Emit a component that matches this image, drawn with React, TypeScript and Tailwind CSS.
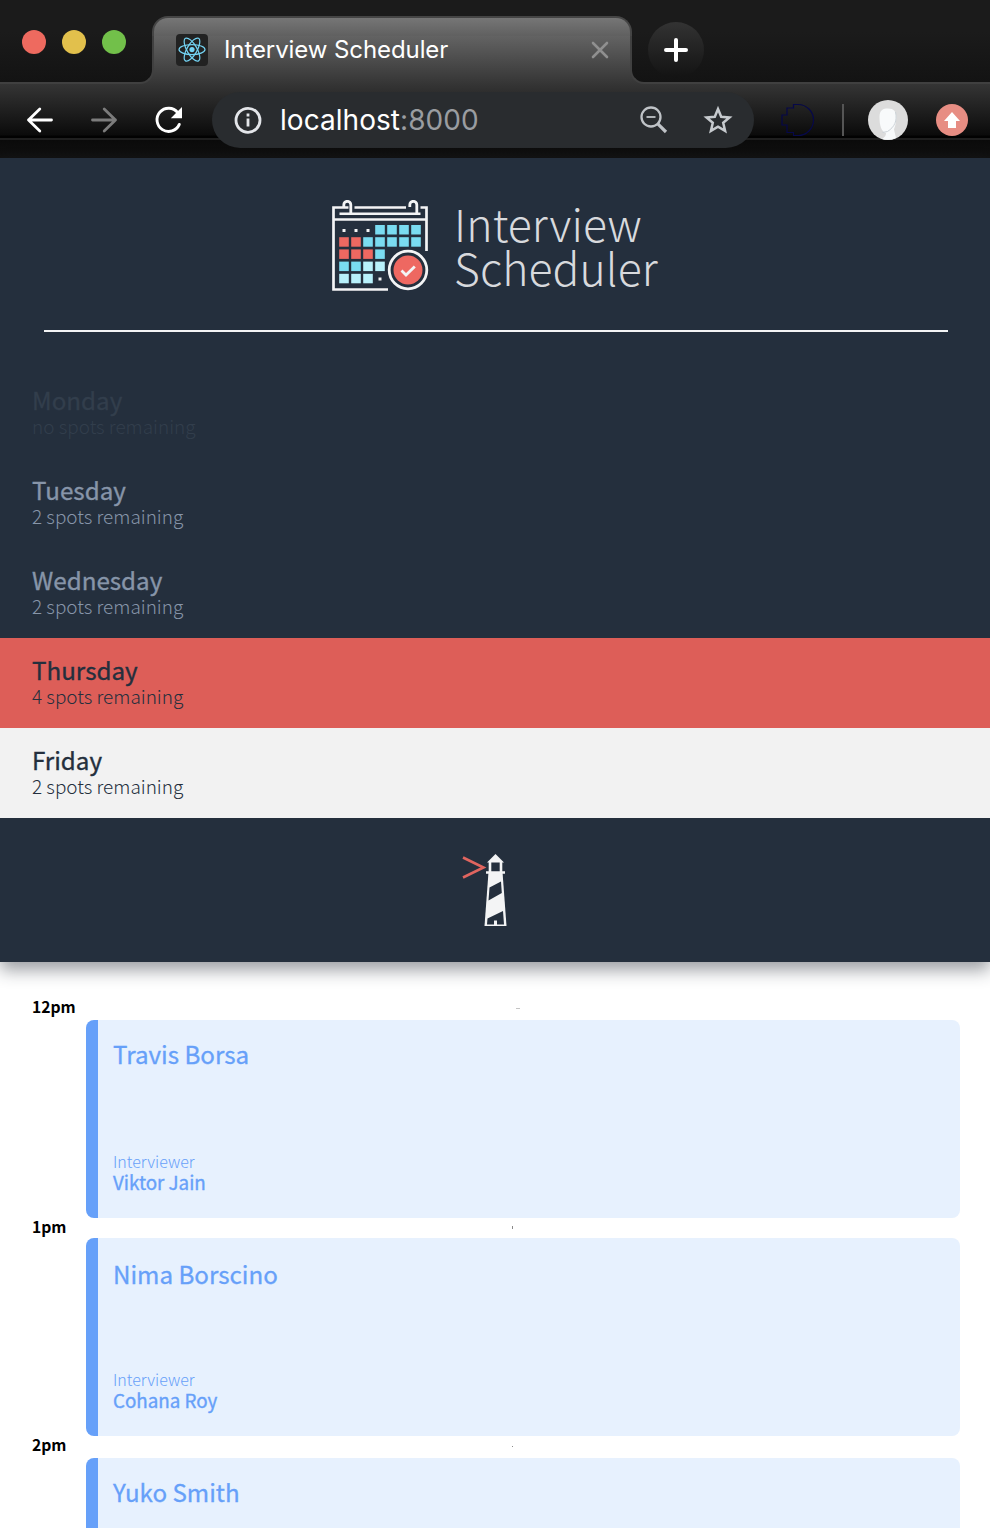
import type { ReactNode } from "react";

const days = [
  { name: "Monday", spots: "no spots remaining", row: "text-[#323e4c]" },
  { name: "Tuesday", spots: "2 spots remaining", row: "text-[#8795a9]" },
  { name: "Wednesday", spots: "2 spots remaining", row: "text-[#8795a9]" },
  { name: "Thursday", spots: "4 spots remaining", row: "bg-[#dd5e58] text-[#242f3d]" },
  { name: "Friday", spots: "2 spots remaining", row: "bg-[#f2f2f2] text-[#242f3d]" },
];

const appointments = [
  { time: "12pm", student: "Travis Borsa", interviewer: "Viktor Jain", slot: "h-[218px]", card: "h-[198px] pt-[19px]", label: "h-[18px] mb-1", gap: "mt-[81px]", mark: "mt-0.5 ml-[441px] h-px w-1 bg-[#c4c4c4]" },
  { time: "1pm", student: "Nima Borscino", interviewer: "Cohana Roy", slot: "h-[220px]", card: "h-[198px] pt-[21px]", label: "h-[22px]", gap: "mt-[79px]", mark: "ml-[437px] h-[3px] w-px bg-[#8a8a8a]" },
  { time: "2pm", student: "Yuko Smith", interviewer: "", slot: "h-[92px]", card: "h-[70px] rounded-b-none pt-[19px]", label: "h-[18px] mb-1", gap: "", mark: "mt-0.5 ml-[437px] h-px w-px bg-[#8a8a8a]" },
];

function ReactMark() {
  return (
    <div className="flex size-8 items-center justify-center rounded bg-[#222]">
      <svg width="30" height="30" viewBox="0 0 30 30" fill="none" stroke="#74d4f4" strokeWidth="1.2">
        <ellipse cx="15" cy="14.6" rx="13" ry="5" />
        <ellipse cx="15" cy="14.6" rx="13" ry="5" transform="rotate(60 15 14.6)" />
        <ellipse cx="15" cy="14.6" rx="13" ry="5" transform="rotate(120 15 14.6)" />
        <circle cx="15" cy="14.6" r="2.6" fill="#74d4f4" stroke="none" />
      </svg>
    </div>
  );
}

function TabStrip() {
  return (
    <div className="flex h-[84px]">
      <div className="flex w-[154px] flex-col">
        <div className="h-8 w-full bg-[#1b1b1b]" />
        <div className="h-[52px] rounded-br-[14px] border-r-2 border-b-2 border-[#404040] bg-linear-to-b from-[#1b1b1b] to-[#131313]">
          <div className="-mt-0.5 flex gap-4 pl-[22px]">
            <span className="size-6 rounded-full bg-[#ee6a5f]" />
            <span className="size-6 rounded-full bg-[#e2c04c]" />
            <span className="size-6 rounded-full bg-[#72c04a]" />
          </div>
        </div>
      </div>
      <div className="relative -ml-0.5 h-[36px] w-[480px] shrink-0 bg-[#1b1b1b] pt-4">
        <div className="flex h-[68px] items-start">
          <div className="h-5 w-full rounded-t-[16px] border-x-2 border-t-2 border-[#454545] bg-linear-to-b from-[#767676] to-[#606060]">
            <div className="flex items-center pt-4 pl-[22px]">
              <ReactMark />
              <span className="ml-4 w-[360px] font-[Inter] text-[24px] leading-8 font-normal tracking-[-0.09px] whitespace-nowrap text-white">Interview Scheduler</span>
              <svg className="ml-[7px] shrink-0" width="18" height="18" viewBox="0 0 18 18" stroke="#8f8f8f" strokeWidth="2.6" strokeLinecap="round">
                <path d="M2 2 16 16M16 2 2 16" />
              </svg>
            </div>
          </div>
        </div>
      </div>
      <div className="-ml-0.5 flex min-w-0 flex-1 flex-col">
        <div className="ml-0.5 h-8 bg-[#1b1b1b]" />
        <div className="h-[52px] rounded-bl-[14px] border-b-2 border-l-2 border-[#404040] bg-linear-to-b from-[#1b1b1b] to-[#131313] pl-4">
          <div className="-mt-2.5 flex size-14 items-center justify-center rounded-full bg-linear-to-b from-[#333] to-[#131313]">
            <svg width="24" height="24" viewBox="0 0 24 24" stroke="#fff" strokeWidth="4" strokeLinecap="round">
              <path d="M12 2v20M2 12h20" />
            </svg>
          </div>
        </div>
      </div>
    </div>
  );
}

function Toolbar() {
  return (
    <div className="flex h-[72px] items-center">
      <svg className="ml-[26px]" width="28" height="28" viewBox="0 0 28 28" fill="none" stroke="#fff" strokeWidth="2.8" strokeLinecap="round" strokeLinejoin="round">
        <path d="M13.8 3 2.5 14l11.3 11M2.5 14h23" />
      </svg>
      <svg className="ml-[36px]" width="28" height="28" viewBox="0 0 28 28" fill="none" stroke="#7c7c7c" strokeWidth="2.8" strokeLinecap="round" strokeLinejoin="round">
        <path d="M14.2 3 25.5 14 14.2 25M25.5 14h-23" />
      </svg>
      <svg className="ml-[36px]" width="30" height="30" viewBox="0 0 30 30" fill="none">
        <path d="M25.3 19.4A11.6 11.6 0 1 1 23.7 7.6" stroke="#fff" strokeWidth="2.9" strokeLinecap="round" />
        <path d="M28 2v11.2H16.8Z" fill="#fff" />
      </svg>
      <div className="ml-[28px] flex h-14 w-[542px] items-center rounded-full bg-[#292c2f]">
        <svg className="ml-[22px]" width="28" height="28" viewBox="0 0 28 28" fill="none" stroke="#e4e6ea" strokeWidth="2.8">
          <circle cx="14" cy="14.3" r="12" />
          <path d="M14 12.5v8M14 7.6v3" />
        </svg>
        <span className="ml-[18px] w-[360px] font-[Inter] text-[28px] leading-8 tracking-[0.05px] text-[#9a9da1]"><span className="text-white">localhost</span>:8000</span>
        <svg width="28" height="28" viewBox="0 0 28 28" fill="none" stroke="#bfc3c7">
          <circle cx="11" cy="11" r="9.5" strokeWidth="2.3" />
          <path d="M6.5 11h9" strokeWidth="1.8" />
          <path d="M17.6 17.6 26 26" strokeWidth="3.2" />
        </svg>
        <svg className="ml-[35px]" width="30" height="30" viewBox="0 0 30 30" fill="none" stroke="#c6cace" strokeWidth="2.5">
          <path d="m15 4 3.2 7.7 8.3.7-6.3 5.4 1.9 8.1-7.1-4.3-7.1 4.3 1.9-8.1-6.3-5.4 8.3-.7Z" />
        </svg>
      </div>
      <svg className="ml-[27px]" width="34" height="34" viewBox="0 0 34 34" fill="none" stroke="#06084a" strokeWidth="1.2">
        <path d="M17 1.5a15.5 15.5 0 0 1 0 31H12.500V29.5H6V22H1V12h5V5h6.500V1.5Z" />
      </svg>
      <span className="ml-[27px] h-8 w-0.5 bg-[#555]" />
      <svg className="ml-6" width="40" height="40" viewBox="0 0 40 40">
        <circle cx="20" cy="20" r="20" fill="#dcdcdc" />
        <path d="M11.5 17C11.5 10 15 8.5 20 8.5c6 0 8.5 3.5 8.3 9-.2 6-1.300 9-2.300 12l2 8.500a20 20 0 0 1-14 1c3-2 4-3.500 4-6-4.500-1-6.500-7-6.500-16Z" fill="#f8fafb" />
        <path d="M27.5 12c2 9-1 15-8 19.500l-5 1" fill="none" stroke="#ccd3d8" strokeWidth="1" />
      </svg>
      <svg className="ml-7" width="32" height="32" viewBox="0 0 32 32">
        <circle cx="16" cy="16" r="16" fill="#e78d83" />
        <path d="m16 8 8 9h-4v7h-8v-7H8Z" fill="#fff" />
      </svg>
    </div>
  );
}

const cells: [number, number, string][] = [];
const B = "#7adcf1";
const R = "#ee6861";
const L = "#b8f1fb";
[
  ["", "", "", B, B, B, B],
  [R, R, B, B, B, B, B],
  [R, R, R, B],
  [B, B, L, L],
  [L, L, L],
].forEach((line, r) => line.forEach((c, i) => c && cells.push([7.2 + i * 12, 25 + r * 12.2, c])));

function CalendarLogo() {
  return (
    <svg width="98" height="94" viewBox="0 0 98 94" fill="none" stroke="#f3f4f5" strokeWidth="3">
      <path d="M56 89.500H1.500V7.500h15M22.500 7.500H74M88.500 7.500h6V51" strokeWidth="2.700" />
      <path d="M1.500 19.500h93" strokeWidth="2.600" />
      <path d="M7.500 13.700h81" strokeWidth="2.400" />
      <path d="M11.800 7V4.800a3.400 3.400 0 0 1 7 0V13M77.800 7V4.800a3.400 3.400 0 0 1 7 0V13" strokeWidth="2.800" />
      {cells.map(([x, y, c]) => (
        <rect key={`${x}-${y}`} x={x} y={y} width="9.600" height="9.500" fill={c} stroke="none" />
      ))}
      <g fill="#f3f4f5" stroke="none">
        <rect x="10.500" y="29" width="3" height="3" />
        <rect x="22.500" y="29" width="3" height="3" />
        <rect x="34.500" y="29" width="3" height="3" />
        <rect x="46.500" y="77.500" width="3" height="3" />
      </g>
      <circle cx="76" cy="70" r="20.500" fill="#242f3d" stroke="none" />
      <circle cx="76" cy="70" r="18.800" fill="#242f3d" strokeWidth="2.800" />
      <circle cx="76" cy="70" r="14.500" fill={R} stroke="none" />
      <path d="m69.500 70.500 4.500 4.500 8.800-8.500" strokeWidth="2.800" />
    </svg>
  );
}

function Lighthouse() {
  return (
    <svg width="48" height="74" viewBox="0 0 48 74" fill="none">
      <path d="M1 4.500 21.500 14.500 1 24.500" stroke="#e0655f" strokeWidth="2.600" />
      <path d="M33.500 1 42 9.500H25Z" fill="#f3f4f5" />
      <path d="M28 9v11M39 9v11M24 19.500h19" stroke="#f3f4f5" strokeWidth="2.600" />
      <path d="M26.500 19h14l4 54h-22Z" fill="#f3f4f5" />
      <path d="m27.500 34.500 11.500-6 .8 11.500-13.300 7.500ZM25.500 65.500l15.500-7.500 1 13.500H35v-4h-3v4h-7Z" fill="#242f3d" />
    </svg>
  );
}

function Sans({ children, className }: { children: ReactNode; className: string }) {
  return <div className={`whitespace-nowrap ${className}`}>{children}</div>;
}

export default function App() {
  return (
    <div className="h-[1528px] w-[990px] overflow-hidden bg-white font-['Noto_Sans_CJK_SC',sans-serif]">
      <header className="h-[158px] bg-[linear-gradient(to_bottom,#767676_16px,#333_86px,#0b0b0b_135px,#020202_136px,#020202_138px,#1f1f1f_138px,#1f1f1f_140px,#0a0a0a_140px,#111_157px)]">
        <TabStrip />
        <Toolbar />
      </header>
      <aside className="relative h-[804px] bg-[#242f3d] shadow-[0_8px_16px_rgba(34,40,52,0.45)]">
        <div className="flex h-[172px] pt-[42px] pl-[332px]">
          <CalendarLogo />
          <div className="ml-[24px] pt-px text-[44.5px] leading-[44px] font-light text-[#d8dadd]">
            <Sans className="w-[210px] tracking-[0.1px]">Interview</Sans>
            <Sans className="w-[210px] tracking-[0.1px]">Scheduler</Sans>
          </div>
        </div>
        <div className="ml-[44px] h-0.5 w-[904px] bg-[#f3f4f5]" />
        <ul className="mt-9">
          {days.map((d) => (
            <li key={d.name} className={`h-[90px] pt-[18px] pl-8 ${d.row}`}>
              <Sans className="text-[24.2px] leading-7 font-normal [-webkit-text-stroke:0.35px_currentColor]">{d.name}</Sans>
              <Sans className="text-[18.95px] leading-6 font-light">{d.spots}</Sans>
            </li>
          ))}
        </ul>
        <div className="flex pt-[35px] pl-[462px]">
          <Lighthouse />
        </div>
      </aside>
      <main className="pt-[36px]">
        {appointments.map((a) => (
          <section key={a.time} className={a.slot}>
            <div className={`flex items-center pl-8 ${a.label}`}>
              <Sans className="w-[43px] text-[15.7px] leading-[18px] font-bold text-black">{a.time}</Sans>
              <span className={a.mark} />
            </div>
            <article className={`ml-[86px] flex w-[874px] flex-col overflow-hidden rounded-lg border-l-12 border-[#66a0f9] bg-[#e7f1fe] pl-[15px] text-[#66a0f9] ${a.card}`}>
              <Sans className="text-[24.15px] leading-[30px] [-webkit-text-stroke:0.3px_currentColor]">{a.student}</Sans>
              {a.interviewer && (
                <>
                  <Sans className={`text-[16px] leading-[22px] font-light ${a.gap}`}>Interviewer</Sans>
                  <Sans className="text-[18.8px] leading-[20px] [-webkit-text-stroke:0.35px_currentColor]">{a.interviewer}</Sans>
                </>
              )}
            </article>
          </section>
        ))}
      </main>
    </div>
  );
}
